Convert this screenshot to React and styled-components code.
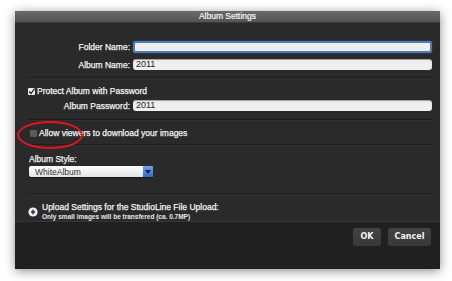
import styled, { createGlobalStyle } from "styled-components";

const GlobalStyle = createGlobalStyle`
  html, body {
    margin: 0;
    padding: 0;
    background: #ffffff;
  }
  body {
    font-family: "Liberation Sans", Arial, sans-serif;
  }
`;

const Page = styled.div`
  width: 452px;
  height: 281px;
  padding: 11px 0 0 15px;
  box-sizing: border-box;
`;

const Dialog = styled.div`
  position: relative;
  width: 425px;
  height: 258px;
  background: #2a2a2a;
  display: flex;
  flex-direction: column;
  box-shadow: 0 2px 10px rgba(0, 0, 0, 0.45);
  color: #f2f2f2;
`;

const TitleBar = styled.div`
  height: 11px;
  background: linear-gradient(#6a6a6a, #545454);
  border-bottom: 1px solid #3a3a3a;
  font-size: 8.5px;
  -webkit-text-stroke: 0.2px #f4f4f4;
  line-height: 11px;
  text-align: center;
  color: #f4f4f4;
`;

const Body = styled.div`
  flex: 1;
  display: flex;
  flex-direction: column;
  padding: 18px 8px 0 12px;
`;

const FieldRow = styled.div`
  display: flex;
  align-items: center;
  height: ${props => props.$h || 11}px;
  margin-top: ${props => props.$mt || 0}px;
`;

const Label = styled.div`
  width: 103px;
  text-align: right;
  padding-right: 3px;
  font-size: 8.5px;
  -webkit-text-stroke: 0.25px #f2f2f2;
`;

const Input = styled.div`
  flex: 1;
  height: 100%;
  box-sizing: border-box;
  background: #efefef;
  border-radius: 3px;
  font-size: 9px;
  color: #222;
  padding-left: 3px;
  line-height: ${props => props.$focus ? 8 : 11}px;
  box-shadow: inset 0 1px 1px rgba(0, 0, 0, 0.35);
  ${props => props.$focus && `
    border: 2px solid #4a7cc0;
    box-shadow: 0 0 1px #6f9de0;
  `}
`;

const Separator = styled.div`
  height: 1px;
  background: #1c1c1c;
  border-bottom: 1px solid #303030;
  margin-top: ${props => props.$mt}px;
`;

const CheckRow = styled.div`
  display: flex;
  align-items: center;
  height: 10px;
  margin-top: ${props => props.$mt}px;
  margin-left: ${props => props.$ml || 0}px;
  font-size: 8.5px;
  -webkit-text-stroke: 0.25px #f2f2f2;
`;

const Box = styled.div`
  width: 7px;
  height: 7px;
  margin-right: 2px;
  border-radius: 1px;
  background: ${props => props.$checked ? "#f0f0f0" : "#5a5a5a"};
  display: flex;
  align-items: center;
  justify-content: center;
`;

const Ring = styled.div`
  position: absolute;
  left: 2px;
  top: 110px;
  width: 62px;
  height: 24px;
  border: 2px solid #e0161d;
  border-radius: 50%;
  pointer-events: none;
`;

const StyleLabel = styled.div`
  margin-top: 8px;
  margin-left: 2px;
  font-size: 8.5px;
  -webkit-text-stroke: 0.25px #f2f2f2;
  line-height: 10px;
`;

const Select = styled.div`
  margin-top: 2px;
  margin-left: 2px;
  width: 124px;
  height: 11px;
  border-radius: 2px;
  background: linear-gradient(#ffffff, #e2e2e2);
  display: flex;
  align-items: center;
  font-size: 8.5px;
  color: #333;
  box-sizing: border-box;
  padding-left: 6px;
  box-shadow: 0 1px 1px rgba(0, 0, 0, 0.5);
`;

const SelectText = styled.div`
  flex: 1;
`;

const SelectArrow = styled.div`
  width: 10px;
  height: 11px;
  border-radius: 0 2px 2px 0;
  background: linear-gradient(#6fa5ea, #2f6ad0);
  display: flex;
  align-items: center;
  justify-content: center;
`;

const Upload = styled.div`
  display: flex;
  align-items: center;
  margin-top: 7px;
  margin-left: 1px;
`;

const UploadText = styled.div`
  margin-left: 4px;
  display: flex;
  flex-direction: column;
`;

const UploadTitle = styled.div`
  font-size: 8.5px;
  -webkit-text-stroke: 0.25px #f2f2f2;
  line-height: 10px;
`;

const UploadSub = styled.div`
  font-size: 6.5px;
  font-weight: 700;
  line-height: 9px;
  color: #e8e8e8;
`;

const Footer = styled.div`
  height: 42px;
  background: #202020;
  border-top: 1px solid #353535;
  display: flex;
  justify-content: flex-end;
  align-items: flex-start;
  padding: 6px 9px 0 0;
  gap: 7px;
`;

const Button = styled.div`
  width: ${props => props.$w}px;
  height: 18px;
  border-radius: 3px;
  background: linear-gradient(#444, #383838);
  color: #f4f4f4;
  font-family: "DejaVu Sans", sans-serif;
  font-size: 8px;
  font-weight: 700;
  line-height: 18px;
  text-align: center;
`;

export default function App() {
  return (
    <>
      <GlobalStyle />
      <Page>
        <Dialog>
          <TitleBar>Album Settings</TitleBar>
          <Body>
            <FieldRow $h={12}>
              <Label>Folder Name:</Label>
              <Input $focus />
            </FieldRow>
            <FieldRow $mt={6}>
              <Label>Album Name:</Label>
              <Input>2011</Input>
            </FieldRow>
            <Separator $mt={7} />
            <CheckRow $mt={7} $ml={1}>
              <Box $checked>
                <svg width="7" height="7" viewBox="0 0 7 7">
                  <path d="M1 3.5 L3 5.5 L6.5 0.5" stroke="#222" strokeWidth="1.3" fill="none" />
                </svg>
              </Box>
              Protect Album with Password
            </CheckRow>
            <FieldRow $mt={4}>
              <Label>Album Password:</Label>
              <Input>2011</Input>
            </FieldRow>
            <Separator $mt={8} />
            <CheckRow $mt={7} $ml={3}>
              <Box />
              Allow viewers to download your images
            </CheckRow>
            <Separator $mt={6} />
            <StyleLabel>Album Style:</StyleLabel>
            <Select>
              <SelectText>WhiteAlbum</SelectText>
              <SelectArrow>
                <svg width="6" height="4" viewBox="0 0 6 4">
                  <path d="M0 0 L6 0 L3 4 Z" fill="#10204a" />
                </svg>
              </SelectArrow>
            </Select>
            <Separator $mt={16} />
            <Upload>
              <svg width="10" height="10" viewBox="0 0 10 10">
                <circle cx="5" cy="5" r="4.6" fill="#f0f0f0" />
                <path d="M5 2.8 V7.2 M2.8 5 H7.2" stroke="#333" strokeWidth="1.6" />
              </svg>
              <UploadText>
                <UploadTitle>Upload Settings for the StudioLine File Upload:</UploadTitle>
                <UploadSub>Only small images will be transfered (ca. 0.7MP)</UploadSub>
              </UploadText>
            </Upload>
          </Body>
          <Footer>
            <Button $w={28}>OK</Button>
            <Button $w={43}>Cancel</Button>
          </Footer>
          <Ring />
        </Dialog>
      </Page>
    </>
  );
}
